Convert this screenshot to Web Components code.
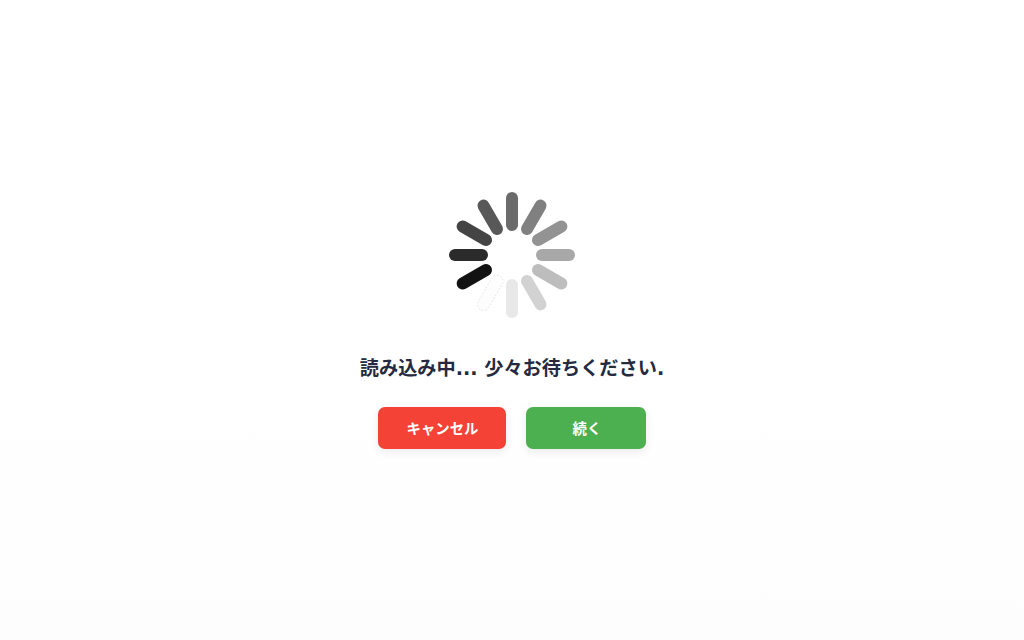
<!DOCTYPE html>
<html lang="ja">
<head>
<meta charset="utf-8">
<title>読み込み中</title>
<style>
html, body { margin: 0; height: 100%; background: #fff; }
body { font-family: "DejaVu Sans", "Noto Sans CJK JP", sans-serif; }
</style>
</head>
<body>
<loading-screen>
    <loading-spinner></loading-spinner>
    <span slot="message">読み込み中... 少々お待ちください.</span>
    <action-button slot="actions" color="#f44336">キャンセル</action-button>
    <action-button slot="actions" color="#4caf50" wide>続く</action-button>
</loading-screen>

<script>
class LoadingScreen extends HTMLElement{
    constructor(){
        super();
        this.attachShadow({mode: 'open'});
        this.shadowRoot.innerHTML = `
<style>
:host{
    display: flex;
    flex-direction: column;
    align-items: center;
    justify-content: center;
    box-sizing: border-box;
    height: 640px;
    padding-top: 1px;
    background: linear-gradient(#ffffff 60%, #fdfdfd);
}
.message{
    margin: 37px 0 24px;
    font-size: 19.2px;
    line-height: 28px;
    font-weight: 700;
    color: #262a40;
}
.actions{
    display: flex;
    gap: 20px;
}
</style>
<slot></slot>
<div class="message"><slot name="message"></slot></div>
<div class="actions"><slot name="actions"></slot></div>
`;
    }
}

class LoadingSpinner extends HTMLElement{
    constructor(){
        super();
        this.attachShadow({mode: 'open'});
        // 12 bars, clockwise from 12 o'clock; the one at 7 o'clock is nearly white
        const greys = ['#6b6b6b','#808080','#939393','#a8a8a8','#bdbdbd','#d2d2d2','#e8e8e8','#fdfdfd','#121212','#2b2b2b','#444444','#585858'];
        let bars = '';
        greys.forEach((grey, i) => {
            const edge = i === 7 ? ' stroke="#dedede" stroke-width="0.6" stroke-dasharray="2 1.5"' : '';
            bars += `<rect x="57" y="0" width="12" height="39" rx="6" fill="${grey}"${edge} transform="rotate(${i * 30} 63 63)"/>`;
        });
        this.shadowRoot.innerHTML = `
<style>
:host{ display: block; width: 126px; height: 126px; }
svg{ display: block; }
</style>
<svg width="126" height="126" viewBox="0 0 126 126">${bars}</svg>
`;
    }
}

class ActionButton extends HTMLElement{
    constructor(){
        super();
        this.attachShadow({mode: 'open'});
        this.shadowRoot.innerHTML = `
<style>
:host{
    display: block;
    box-sizing: border-box;
    height: 42px;
    min-width: 120px;
    padding: 0 28px;
    border-radius: 7px;
    background: ${this.getAttribute('color')};
    color: #fff;
    font-size: 14.4px;
    font-weight: 700;
    line-height: 44px;
    text-indent: 1px;
    text-align: center;
    box-shadow: 0 3px 10px rgba(0,0,0,0.08);
}
</style>
<slot></slot>
`;
    }
}

customElements.define('loading-screen', LoadingScreen);
customElements.define('loading-spinner', LoadingSpinner);
customElements.define('action-button', ActionButton);
</script>
</body>
</html>
